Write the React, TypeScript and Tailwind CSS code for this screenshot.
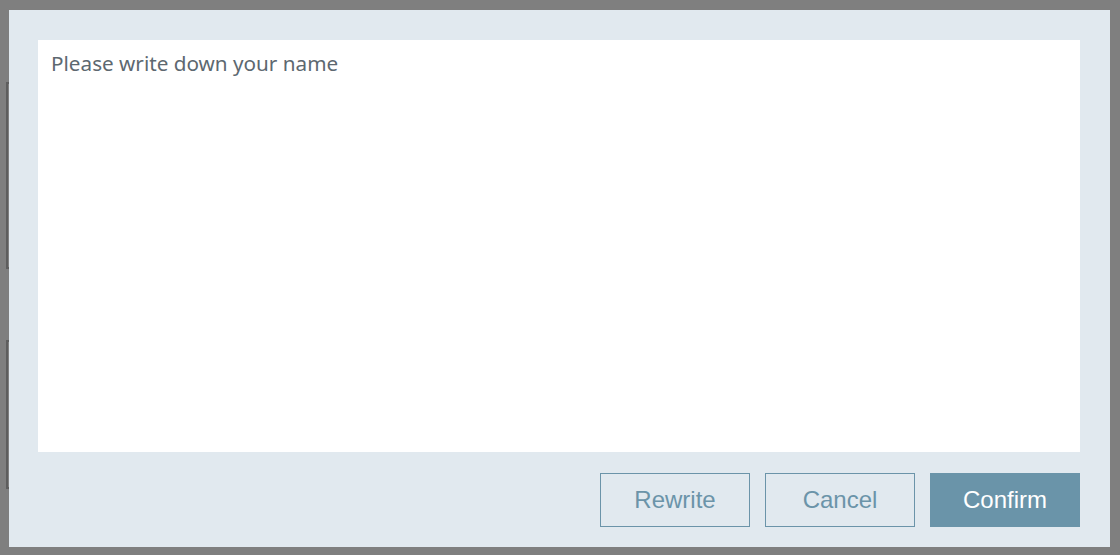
import React from "react";

export default function App() {
  return (
    <div className="relative w-[1120px] h-[555px] bg-[#7f7f7f] overflow-hidden">
      {/* underlying page hints */}
      <div className="absolute left-[6px] top-[82px] w-[40px] h-[187px] border-2 border-[#5e5e5e]" />
      <div className="absolute left-[6px] top-[340px] w-[40px] h-[149px] border-2 border-[#5e5e5e]" />
      <div className="absolute left-[9px] top-[10px] w-[1101px] h-[537px] bg-[#e1e9ef] flex flex-col pt-[30px] pl-[29px] pr-[30px] pb-[20px]">
        <textarea
          placeholder="Please write down your name"
          className="w-full h-[412px] bg-white resize-none outline-none px-[13px] py-[9px] text-[20.7px] leading-[28px] text-[#5d6870] placeholder:text-[#5d6870]"
          style={{ fontFamily: '"Noto Sans", "Open Sans", sans-serif' }}
        />
        <div className="flex justify-end gap-[15px] mt-[21px]">
          <button
            className="w-[150px] h-[54px] border border-[#6b94a9] text-[#6b94a9] text-[24px] bg-transparent"
            style={{ fontFamily: '"Liberation Sans", Arial, sans-serif' }}
          >
            Rewrite
          </button>
          <button
            className="w-[150px] h-[54px] border border-[#6b94a9] text-[#6b94a9] text-[24px] bg-transparent"
            style={{ fontFamily: '"Liberation Sans", Arial, sans-serif' }}
          >
            Cancel
          </button>
          <button
            className="w-[150px] h-[54px] bg-[#6a94a9] text-white text-[24px]"
            style={{ fontFamily: '"Liberation Sans", Arial, sans-serif' }}
          >
            Confirm
          </button>
        </div>
      </div>
    </div>
  );
}
